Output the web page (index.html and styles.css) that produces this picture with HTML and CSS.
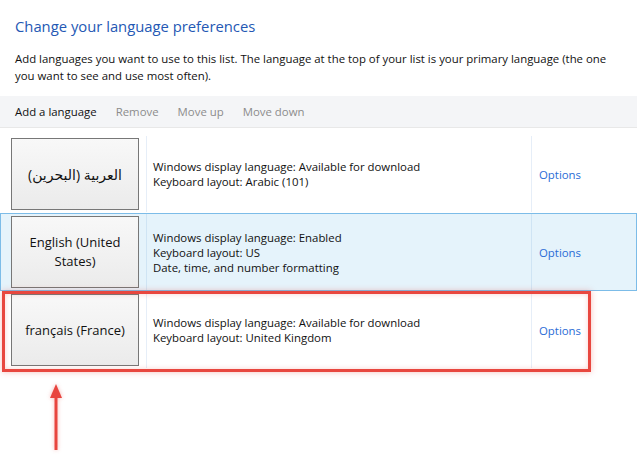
FILE: index.html
```html
<!DOCTYPE html>
<html lang="en">
<head>
  <meta charset="UTF-8">
  <meta name="viewport" content="width=device-width, initial-scale=1.0">
  <title>Language</title>
  <link rel="stylesheet" href="styles.css">
</head>
<body>
  <div id="wrap">
    <h1 class="title">Change your language preferences</h1>
    <p class="intro">Add languages you want to use to this list. The language at the top of your list is your primary language (the one<br>you want to see and use most often).</p>
    <div class="toolbar">
      <span class="tool">Add a language</span>
      <span class="tool off">Remove</span>
      <span class="tool off">Move up</span>
      <span class="tool off">Move down</span>
    </div>
    <div class="langlist">
      <div class="lang">
        <div class="lang-name"><div class="lang-btn"><span class="ar" dir="rtl">العربية (البحرين)</span></div></div>
        <div class="lang-info">Windows display language: Available for download<br>Keyboard layout: Arabic (101)</div>
        <div class="lang-opt"><a href="#">Options</a></div>
      </div>
      <div class="lang on">
        <div class="lang-name"><div class="lang-btn">English (United<br>States)</div></div>
        <div class="lang-info">Windows display language: Enabled<br>Keyboard layout: US<br>Date, time, and number formatting</div>
        <div class="lang-opt"><a href="#">Options</a></div>
      </div>
      <div class="lang">
        <div class="lang-name"><div class="lang-btn">français (France)</div></div>
        <div class="lang-info">Windows display language: Available for download<br>Keyboard layout: United Kingdom</div>
        <div class="lang-opt"><a href="#">Options</a></div>
      </div>
    </div>
    <!-- annotation -->
    <div class="mark"></div>
    <svg class="arrow" width="32" height="76" viewBox="0 0 32 76">
      <line x1="16" y1="70" x2="16" y2="16" stroke="#e8453e" stroke-width="3"/>
      <polygon points="16,4 10,18 22,18" fill="#e8453e"/>
    </svg>
  </div>
</body>
</html>
```

FILE: styles.css
```css
* { margin: 0; padding: 0; box-sizing: border-box; }
body {
  background: #fff;
  font-family: "Open Sans", "DejaVu Sans", sans-serif;
  font-size: 11.4px;
  color: #111;
}
#wrap {
  position: relative;
  width: 637px;
  height: 461px;
  overflow: hidden;
}
.title {
  font-size: 14.8px;
  font-weight: normal;
  color: #2458b4;
  line-height: 22px;
  padding: 15px 15px 0;
}
.intro {
  padding: 13px 15px 0;
  line-height: 17px;
  white-space: nowrap;
}
.toolbar {
  margin-top: 12px;
  height: 32px;
  background: #f4f5f7;
  border-bottom: 1px solid #e8e8e8;
  padding-left: 15px;
  display: flex;
  gap: 19px;
  line-height: 31px;
}
.tool.off {
  color: #8c8c8c;
}
.langlist {
  padding-top: 7px;
}
.lang {
  display: grid;
  grid-template-columns: 146px 385px 1fr;
  border: 1px solid transparent;
  width: 637px;
}
.lang.on {
  background: #e5f3fb;
  border-color: #7cbce8;
}
.lang-name {
  border-right: 1px solid #e6eef8;
  padding: 2px 0 2px 10px;
}
.lang.on .lang-name,
.lang.on .lang-info {
  border-right-color: #cfe4f4;
}
.lang-btn {
  width: 128px;
  height: 72px;
  border: 1px solid #777;
  background: linear-gradient(#f8f8f8, #ebebeb);
  display: flex;
  align-items: center;
  justify-content: center;
  text-align: center;
  font-size: 13px;
  line-height: 19px;
}
.lang-btn .ar {
  font-size: 14px;
}
.lang-info {
  border-right: 1px solid #e6eef8;
  padding-left: 6px;
  display: flex;
  align-items: center;
  line-height: 15px;
}
.lang-opt {
  padding-left: 7px;
  display: flex;
  align-items: center;
}
.lang-opt a {
  color: #2a6cd6;
  text-decoration: none;
}
.mark {
  position: absolute;
  left: 2px;
  top: 291px;
  width: 589px;
  height: 81px;
  border: 3px solid #e8473f;
  box-shadow: 0 0 6px rgba(232, 71, 63, 0.35), inset 0 0 5px rgba(232, 71, 63, 0.25);
}
.arrow {
  position: absolute;
  left: 40px;
  top: 380px;
  filter: drop-shadow(0 0 2px rgba(232, 69, 62, 0.4));
}
```
